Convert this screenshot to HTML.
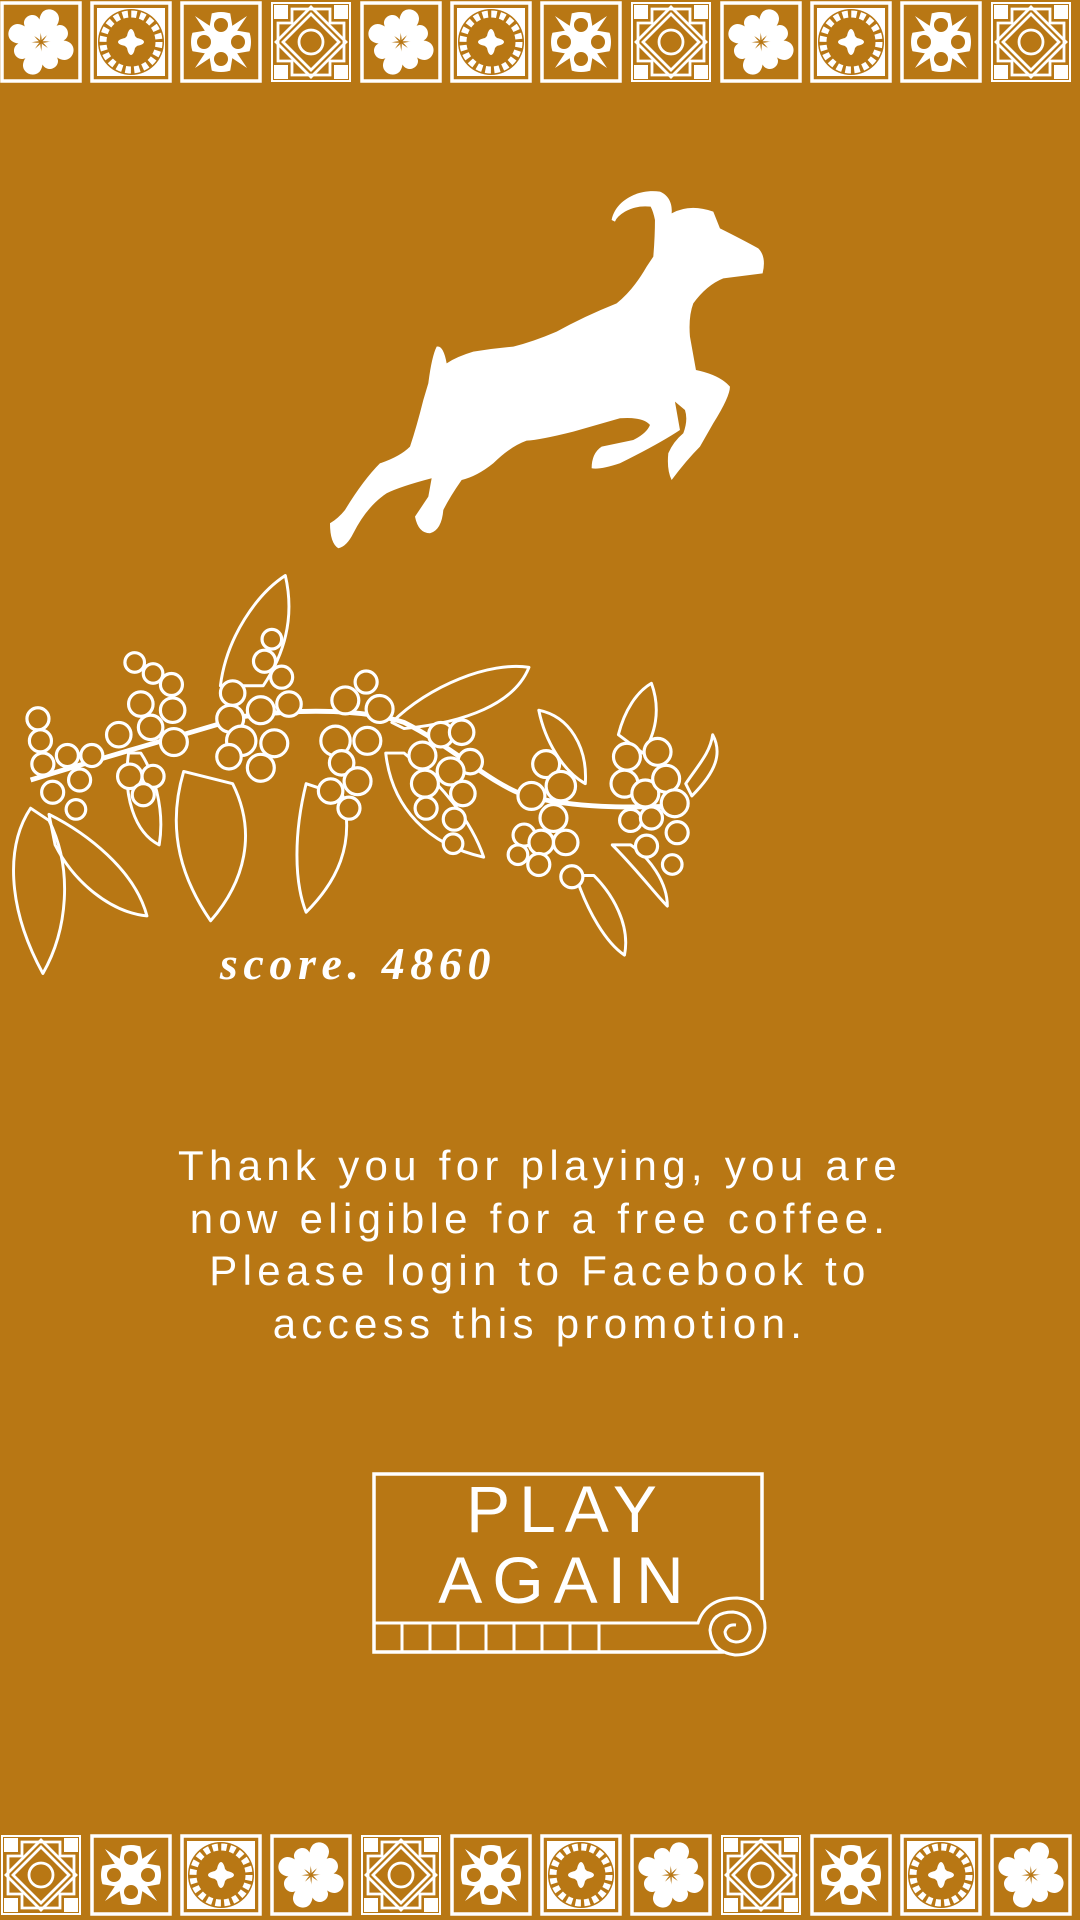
<!DOCTYPE html>
<html><head><meta charset="utf-8"><style>
html,body{margin:0;padding:0}
body{width:1080px;height:1920px;background:#B87714;position:relative;overflow:hidden;font-family:"Liberation Sans",sans-serif;color:#fff}
svg{position:absolute;left:0;top:0}
.t{position:absolute;left:0;width:1080px;text-align:center;white-space:nowrap}
</style></head><body>
<svg width="1080" height="1920" viewBox="0 0 1080 1920">
<defs>
<g id="frame"><rect x="2" y="2" width="78" height="78" fill="none" stroke="#fff" stroke-width="3.5"/></g>
<path id="petal" d="M0,-2 C-2,-8 -12,-18 -9,-28 C-6,-36 6,-36 9,-28 C12,-18 2,-8 0,-2Z" fill="#fff"/>
<g id="flower"><use href="#frame"/><g transform="translate(41,41)">
<use href="#petal" transform="rotate(20)"/><use href="#petal" transform="rotate(110)"/><use href="#petal" transform="rotate(200)"/><use href="#petal" transform="rotate(290)"/>
<use href="#petal" transform="rotate(65) scale(.85)"/><use href="#petal" transform="rotate(155) scale(.85)"/><use href="#petal" transform="rotate(245) scale(.85)"/><use href="#petal" transform="rotate(335) scale(.85)"/></g></g>
<g id="ring"><use href="#frame"/><rect x="7" y="7" width="68" height="68" fill="#fff"/><circle cx="41" cy="41" r="33" fill="#B87714"/>
<circle cx="41" cy="41" r="28" fill="none" stroke="#fff" stroke-width="7" stroke-dasharray="5.5 3.3"/>
<g transform="translate(41,41)" fill="#fff"><circle r="7"/><ellipse rx="4.5" ry="13"/><ellipse rx="13" ry="4.5"/><rect x="-7" y="-7" width="14" height="14" transform="rotate(45)"/></g></g>
<g id="cross"><use href="#frame"/><g transform="translate(41,41)"><circle r="30" fill="#fff"/><rect x="-26" y="-26" width="52" height="52" fill="#fff"/>
<g fill="#B87714"><circle cx="0" cy="-17" r="7"/><circle cx="0" cy="17" r="7"/><circle cx="-17" cy="0" r="7"/><circle cx="17" cy="0" r="7"/>
<path d="M-30,-9 L-12,-12 L-9,-30 L-30,-30Z"/><path d="M30,-9 L12,-12 L9,-30 L30,-30Z"/><path d="M-30,9 L-12,12 L-9,30 L-30,30Z"/><path d="M30,9 L12,12 L9,30 L30,30Z"/></g>
<g fill="#fff"><path d="M-26,-26 L-14,-8 L-8,-14Z"/><path d="M26,-26 L14,-8 L8,-14Z"/><path d="M-26,26 L-14,8 L-8,14Z"/><path d="M26,26 L14,8 L8,14Z"/></g></g></g>
<g id="geo"><rect x="2" y="2" width="78" height="78" fill="none" stroke="#fff" stroke-width="2"/>
<rect x="4" y="4" width="14" height="14" fill="#fff"/><rect x="64" y="4" width="14" height="14" fill="#fff"/><rect x="4" y="64" width="14" height="14" fill="#fff"/><rect x="64" y="64" width="14" height="14" fill="#fff"/>
<g fill="none" stroke="#fff" stroke-width="2.8"><path d="M41,6 L76,41 L41,76 L6,41Z"/><path d="M41,13 L69,41 L41,69 L13,41Z"/><path d="M22,8 H60 V22 H74 V60 H60 V74 H22 V60 H8 V22 H22Z"/><circle cx="41" cy="41" r="12"/></g></g>
</defs>
<use href="#flower" x="0" y="1"/><use href="#ring" x="90" y="1"/><use href="#cross" x="180" y="1"/><use href="#geo" x="270" y="1"/>
<use href="#flower" x="360" y="1"/><use href="#ring" x="450" y="1"/><use href="#cross" x="540" y="1"/><use href="#geo" x="630" y="1"/>
<use href="#flower" x="720" y="1"/><use href="#ring" x="810" y="1"/><use href="#cross" x="900" y="1"/><use href="#geo" x="990" y="1"/>
<use href="#geo" x="0" y="1834"/><use href="#cross" x="90" y="1834"/><use href="#ring" x="180" y="1834"/><use href="#flower" x="270" y="1834"/>
<use href="#geo" x="360" y="1834"/><use href="#cross" x="450" y="1834"/><use href="#ring" x="540" y="1834"/><use href="#flower" x="630" y="1834"/>
<use href="#geo" x="720" y="1834"/><use href="#cross" x="810" y="1834"/><use href="#ring" x="900" y="1834"/><use href="#flower" x="990" y="1834"/>

<g transform="translate(300,170) scale(0.3333)" fill="#fff">
<path d="M935,150 C945,95 1010,55 1080,65 C1105,75 1118,100 1115,130 Q1170,100 1240,125 L1260,175 Q1330,210 1375,235 Q1400,260 1388,310 L1270,325 Q1220,345 1180,400 Q1165,440 1170,500 L1188,600 Q1260,615 1290,650 Q1290,680 1240,760 L1200,830 Q1160,870 1115,930 Q1100,900 1105,850 Q1120,815 1150,790 Q1165,750 1155,720 L1125,695 L1140,780 Q1080,820 960,880 Q900,900 875,895 Q875,850 905,830 L1000,810 Q1040,790 1050,765 Q1030,740 960,745 L820,785 Q720,810 680,812 Q630,830 580,880 Q530,920 485,930 Q450,980 430,1020 Q425,1080 390,1090 Q355,1090 345,1040 Q365,1010 385,980 L395,925 Q300,950 260,970 Q200,1010 160,1090 Q140,1130 115,1135 Q90,1120 90,1060 Q115,1045 135,1020 Q190,930 240,880 Q300,860 330,830 Q350,770 370,690 L385,640 Q395,560 410,530 Q430,525 440,580 Q470,560 520,545 Q580,535 640,530 Q700,515 770,485 Q850,440 950,400 Q1000,360 1040,290 L1060,260 Q1065,200 1065,150 Q1060,125 1052,110 Q1010,105 975,125 Q950,140 945,155 Z"/>
</g>

<g transform="scale(1.2245)" fill="none" stroke="#fff" stroke-width="2.4" stroke-linejoin="round">
<path d="M25,637 C80,620 150,600 200,585 C250,578 300,580 330,590 C370,610 400,640 430,650 C470,660 510,660 560,658" stroke-width="4"/>
<path d="M25,660 C5,690 5,740 35,795 C55,760 60,710 40,670Z"/>
<path d="M40,665 C70,680 110,710 120,748 C90,745 60,720 45,690Z"/>
<path d="M150,630 C135,680 150,720 172,752 C200,720 210,680 190,640Z"/>
<path d="M180,560 C185,520 210,485 233,470 C240,500 235,530 215,560Z"/>
<path d="M250,640 C240,680 240,720 250,745 C275,720 290,690 280,650Z"/>
<path d="M320,590 C350,560 400,540 432,545 C420,575 380,590 330,595Z"/>
<path d="M315,615 C320,660 350,690 395,700 C385,670 360,640 330,615Z"/>
<path d="M440,580 C465,585 480,610 478,640 C460,630 445,605 440,580Z"/>
<path d="M505,600 C510,580 520,565 532,558 C540,580 535,600 525,615Z"/>
<path d="M560,640 C570,625 580,615 582,600 C590,615 585,630 565,650Z"/>
<path d="M470,715 C480,745 495,770 510,780 C515,755 500,730 485,715Z"/>
<path d="M500,690 C520,710 535,730 545,740 C545,720 530,700 515,690Z"/>
<path d="M105,615 C100,650 110,680 130,690 C135,660 125,630 115,615Z"/>
<g fill="#B87714" stroke-width="2.6">
<circle cx="31" cy="587" r="9"/><circle cx="33" cy="605" r="9"/><circle cx="35" cy="624" r="9"/><circle cx="55" cy="617" r="9"/><circle cx="75" cy="617" r="9"/><circle cx="43" cy="647" r="9"/><circle cx="65" cy="637" r="9"/><circle cx="62" cy="661" r="8"/>
<circle cx="110" cy="541" r="8"/><circle cx="125" cy="550" r="8"/><circle cx="140" cy="559" r="9"/><circle cx="115" cy="575" r="10"/><circle cx="141" cy="580" r="10"/><circle cx="97" cy="600" r="10"/><circle cx="123" cy="594" r="10"/><circle cx="142" cy="606" r="11"/><circle cx="106" cy="634" r="10"/><circle cx="125" cy="634" r="9"/><circle cx="117" cy="649" r="9"/>
<circle cx="222" cy="522" r="8"/><circle cx="216" cy="540" r="9"/><circle cx="230" cy="553" r="9"/><circle cx="236" cy="575" r="10"/><circle cx="190" cy="566" r="10"/><circle cx="188" cy="587" r="11"/><circle cx="213" cy="580" r="11"/><circle cx="197" cy="605" r="12"/><circle cx="224" cy="607" r="11"/><circle cx="187" cy="618" r="10"/><circle cx="213" cy="627" r="11"/>
<circle cx="299" cy="557" r="9"/><circle cx="282" cy="572" r="11"/><circle cx="310" cy="579" r="11"/><circle cx="274" cy="605" r="12"/><circle cx="300" cy="605" r="11"/><circle cx="279" cy="623" r="10"/><circle cx="292" cy="638" r="11"/><circle cx="270" cy="646" r="10"/><circle cx="285" cy="660" r="9"/>
<circle cx="360" cy="600" r="10"/><circle cx="377" cy="598" r="10"/><circle cx="345" cy="617" r="11"/><circle cx="384" cy="622" r="10"/><circle cx="347" cy="640" r="11"/><circle cx="368" cy="630" r="11"/><circle cx="378" cy="648" r="10"/><circle cx="348" cy="660" r="9"/><circle cx="371" cy="669" r="9"/><circle cx="370" cy="689" r="8"/>
<circle cx="446" cy="624" r="11"/><circle cx="434" cy="650" r="11"/><circle cx="458" cy="642" r="12"/><circle cx="452" cy="668" r="11"/><circle cx="428" cy="682" r="9"/><circle cx="442" cy="688" r="10"/><circle cx="462" cy="688" r="10"/><circle cx="423" cy="698" r="8"/><circle cx="440" cy="706" r="9"/><circle cx="467" cy="716" r="9"/>
<circle cx="512" cy="618" r="11"/><circle cx="537" cy="614" r="11"/><circle cx="510" cy="640" r="11"/><circle cx="527" cy="648" r="11"/><circle cx="544" cy="636" r="11"/><circle cx="551" cy="656" r="11"/><circle cx="515" cy="670" r="9"/><circle cx="532" cy="668" r="9"/><circle cx="553" cy="680" r="9"/><circle cx="528" cy="691" r="9"/><circle cx="549" cy="706" r="8"/>
</g></g>

<g fill="none" stroke="#fff" stroke-width="3.5">
<path d="M762,1600 L762,1474 L374,1474 L374,1652 L724,1652"/>
<path d="M374,1623 L698,1623 Q706,1598 737,1598 Q765,1600 765,1628 Q763,1655 735,1655 Q712,1652 710,1630 Q712,1612 733,1612 Q750,1614 750,1630 Q747,1642 736,1642 Q726,1641 725,1632 Q727,1624 736,1625" stroke-width="3"/>
<path d="M402,1623 V1652 M430,1623 V1652 M458,1623 V1652 M486,1623 V1652 M514,1623 V1652 M542,1623 V1652 M570,1623 V1652 M599,1623 V1652" stroke-width="3"/>
</g>
</svg>

<div class="t" style="top:934px;left:-182px;font-family:'Liberation Serif',serif;font-style:italic;font-weight:bold;font-size:46px;letter-spacing:5.6px;line-height:60px">score. 4860</div>

<div class="t" style="top:1140px;font-size:42px;line-height:52.7px;letter-spacing:5.3px">Thank you for playing, you are<br>now eligible for a free coffee.<br>Please login to Facebook to<br>access this promotion.</div>

<div class="t" style="top:1474px;left:26px;font-size:66px;line-height:70px;letter-spacing:9px">PLAY</div>
<div class="t" style="top:1545px;left:26px;font-size:66px;line-height:70px;letter-spacing:10px">AGAIN</div>
</body></html>
